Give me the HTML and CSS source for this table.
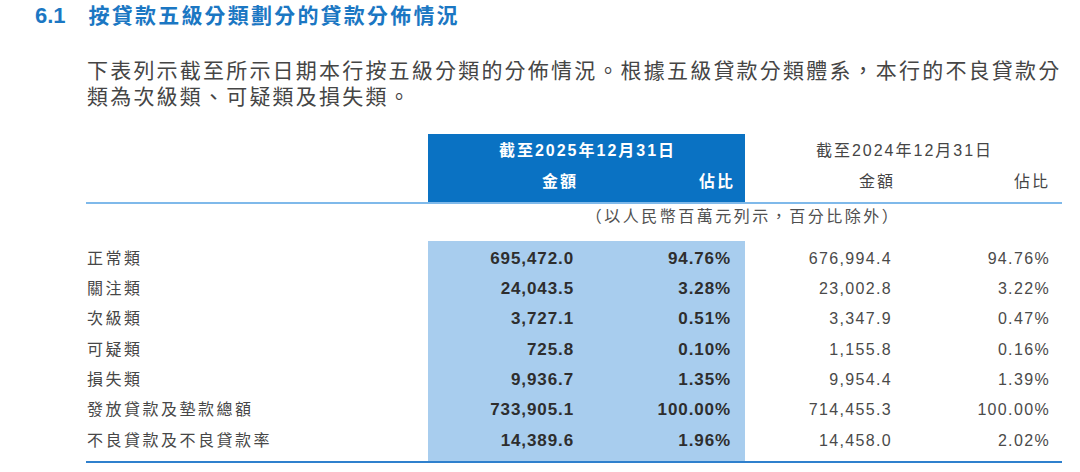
FILE: index.html
```html
<!DOCTYPE html>
<html lang="zh-TW">
<head>
<meta charset="utf-8">
<link rel="stylesheet" href="styles.css">
</head>
<body>
<h1 class="title"><span class="num">6.1</span><span class="ttl">按貸款五級分類劃分的貸款分佈情況</span></h1>
<p class="intro">下表列示截至所示日期本行按五級分類的分佈情況。根據五級貸款分類體系，本行的不良貸款分類為次級類、可疑類及損失類。</p>
<div class="tbl">
  <div class="thead">
    <div class="hblank"></div>
    <div class="hgroup cur">
      <div class="hyear">截至2025年12月31日</div>
      <div class="hsub a">金額</div>
      <div class="hsub p">佔比</div>
    </div>
    <div class="hgroup prev">
      <div class="hyear">截至2024年12月31日</div>
      <div class="hsub a">金額</div>
      <div class="hsub p">佔比</div>
    </div>
  </div>
  <div class="unitrow">
    <div class="unit">（以人民幣百萬元列示，百分比除外）</div>
  </div>
  <div class="tbody">
    <div class="row"><div class="lbl">正常類</div><div class="c ca">695,472.0</div><div class="c cp">94.76%</div><div class="c pa">676,994.4</div><div class="c pp">94.76%</div></div>
    <div class="row"><div class="lbl">關注類</div><div class="c ca">24,043.5</div><div class="c cp">3.28%</div><div class="c pa">23,002.8</div><div class="c pp">3.22%</div></div>
    <div class="row"><div class="lbl">次級類</div><div class="c ca">3,727.1</div><div class="c cp">0.51%</div><div class="c pa">3,347.9</div><div class="c pp">0.47%</div></div>
    <div class="row"><div class="lbl">可疑類</div><div class="c ca">725.8</div><div class="c cp">0.10%</div><div class="c pa">1,155.8</div><div class="c pp">0.16%</div></div>
    <div class="row"><div class="lbl">損失類</div><div class="c ca">9,936.7</div><div class="c cp">1.35%</div><div class="c pa">9,954.4</div><div class="c pp">1.39%</div></div>
    <div class="row"><div class="lbl">發放貸款及墊款總額</div><div class="c ca">733,905.1</div><div class="c cp">100.00%</div><div class="c pa">714,455.3</div><div class="c pp">100.00%</div></div>
    <div class="row"><div class="lbl">不良貸款及不良貸款率</div><div class="c ca">14,389.6</div><div class="c cp">1.96%</div><div class="c pa">14,458.0</div><div class="c pp">2.02%</div></div>
  </div>
</div>
</body>
</html>
```

FILE: styles.css
```css
html, body {
  margin: 0;
  padding: 0;
  background: #ffffff;
}
body {
  font-family: "Liberation Sans", "Noto Sans CJK TC", sans-serif;
  color: #3d3d3d;
}
.title {
  margin: 0;
  padding-left: 35px;
  height: 31px;
  line-height: 31px;
  font-size: 21px;
  font-weight: bold;
  color: #1b77c3;
  display: flex;
  align-items: center;
}
.title .num {
  font-size: 22px;
  margin-right: 23px;
}
.title .ttl {
  letter-spacing: 2.2px;
}
.intro {
  margin: 27px 0 0 0;
  padding-left: 87px;
  width: 980px;
  font-size: 21px;
  line-height: 26px;
  letter-spacing: 2.2px;
  color: #454545;
}
.tbl {
  margin: 24px 0 0 86px;
  width: 976px;
}
.thead {
  display: grid;
  grid-template-columns: 342px 317px 317px;
  height: 68px;
  border-bottom: 2px solid #7fb9ea;
}
.hgroup {
  display: grid;
  grid-template-columns: 159px 158px;
  grid-template-rows: 34px 28px;
  font-size: 16px;
  letter-spacing: 2px;
}
.hgroup.cur {
  background: #0a72c3;
  color: #ffffff;
  font-weight: bold;
}
.hgroup.prev {
  color: #454545;
}
.hyear {
  grid-column: 1 / 3;
  text-align: center;
  line-height: 34px;
  padding-left: 2px;
}
.hsub {
  line-height: 28px;
  text-align: right;
}
.cur .hsub.a { padding-right: 9px; }
.cur .hsub.p { padding-right: 10px; }
.prev .hsub.a { padding-right: 9px; }
.prev .hsub.p { padding-right: 12px; }
.unitrow {
  display: grid;
  grid-template-columns: 342px 634px;
  height: 37px;
}
.unit {
  grid-column: 2;
  text-align: center;
  font-size: 16px;
  letter-spacing: 2.5px;
  line-height: 26px;
  color: #505050;
  padding-right: 4px;
}
.tbody {
  padding: 2.5px 0 5px 0;
  background: linear-gradient(to right, transparent 342px, #a8cdee 342px, #a8cdee 659px, transparent 659px);
  border-bottom: 2px solid #2f80cd;
}
.row {
  display: grid;
  grid-template-columns: 342px 159px 158px 158px 159px;
  height: 30.4px;
  line-height: 30.4px;
}
.lbl {
  font-size: 16px;
  letter-spacing: 2.5px;
  padding-left: 1px;
  color: #474747;
}
.c {
  text-align: right;
}
.ca, .cp {
  font-size: 17px;
  font-weight: bold;
  letter-spacing: 0.9px;
  color: #2e2e2e;
}
.ca { padding-right: 13px; }
.cp { padding-right: 14px; }
.pa, .pp {
  font-size: 16px;
  letter-spacing: 1.35px;
  color: #4a4a4a;
}
.pa { padding-right: 11px; }
.pp { padding-right: 12px; }
```
